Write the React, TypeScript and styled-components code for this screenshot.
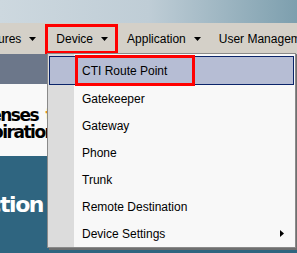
import React from "react";
import styled, { createGlobalStyle } from "styled-components";

const GlobalStyle = createGlobalStyle`
  html, body {
    margin: 0;
    padding: 0;
    background: #2f6580;
  }
`;

interface BarItem {
  label: string;
  highlighted?: boolean;
}

const barItems: BarItem[] = [
  { label: "Features" },
  { label: "Device", highlighted: true },
  { label: "Application" },
  { label: "User Management" },
];

interface MenuEntry {
  label: string;
  active?: boolean;
  submenu?: boolean;
}

const menuEntries: MenuEntry[] = [
  { label: "CTI Route Point", active: true },
  { label: "Gatekeeper" },
  { label: "Gateway" },
  { label: "Phone" },
  { label: "Trunk" },
  { label: "Remote Destination" },
  { label: "Device Settings", submenu: true },
];

const DownArrow = () => (
  <svg width="7" height="4" viewBox="0 0 7 4">
    <polygon points="0,0 7,0 3.5,4" fill="#000" />
  </svg>
);

const RightArrow = () => (
  <svg width="4" height="7" viewBox="0 0 4 7">
    <polygon points="0,0 4,3.5 0,7" fill="#000" />
  </svg>
);

const App: React.FC = () => {
  return (
    <Page>
      <GlobalStyle />
      <Header />
      <MenuBar>
        {barItems.map((item) => (
          <BarButton key={item.label} $highlighted={item.highlighted}>
            {item.label}
            <DownArrow />
          </BarButton>
        ))}
      </MenuBar>
      <Body>
        <SlateBand />
        <Content>
          <Clip>
            <TextLine $shift={-32}>
              Licenses <Accent>that</Accent>
            </TextLine>
            <TextLine $shift={-28}>Expiration</TextLine>
          </Clip>
        </Content>
        <Hero>
          <Clip>
            <HeroTitle>Action</HeroTitle>
          </Clip>
        </Hero>
      </Body>
      <Dropdown>
        {menuEntries.map((entry) => (
          <MenuItem key={entry.label} $active={entry.active}>
            {entry.label}
            {entry.active && <Callout />}
            {entry.submenu && (
              <SubArrow>
                <RightArrow />
              </SubArrow>
            )}
          </MenuItem>
        ))}
      </Dropdown>
    </Page>
  );
};
export default App;

const Page = styled.div`
  position: relative;
  width: 297px;
  height: 253px;
  overflow: hidden;
  display: flex;
  flex-direction: column;
  font-family: "Liberation Sans", Arial, sans-serif;
`;

const Header = styled.div`
  height: 23px;
  flex: none;
  background: linear-gradient(90deg, #cdd8df 0%, #bfcdd6 50%, #7d9fae 100%);
`;

const MenuBar = styled.nav`
  height: 31px;
  flex: none;
  box-sizing: border-box;
  padding-top: 1px;
  margin-left: -35px;
  display: flex;
  background: #d4d0c8;
  white-space: nowrap;
`;

const BarButton = styled.div<{ $highlighted?: boolean }>`
  height: 30px;
  box-sizing: border-box;
  display: flex;
  align-items: center;
  gap: 8px;
  padding: ${(p) => (p.$highlighted ? "0 7px 0 8px" : "0 9px")};
  border: ${(p) => (p.$highlighted ? "3px solid #f00" : "none")};
  font-size: 12px;
  color: #000;
  flex: none;
`;

const Body = styled.div`
  flex: 1;
  display: flex;
  flex-direction: column;
`;

const SlateBand = styled.div`
  height: 30px;
  background: #6c778a;
`;

const Clip = styled.div`
  width: 47px;
  overflow: hidden;
`;

const Content = styled.div`
  height: 72px;
  box-sizing: border-box;
  padding-top: 23px;
  background: #f9f9f9;
  font-family: "DejaVu Sans", Verdana, sans-serif;
  font-weight: bold;
  font-size: 17px;
  line-height: 17px;
  letter-spacing: -1.5px;
  word-spacing: 3px;
  color: #000;
  white-space: nowrap;
`;

const TextLine = styled.div<{ $shift: number }>`
  margin-left: ${(p) => p.$shift}px;
`;

const Accent = styled.span`
  color: #e8901c;
`;

const Hero = styled.div`
  flex: 1;
  background: #2f6580;
  padding-top: 36px;
`;

const HeroTitle = styled.div`
  margin-left: -27px;
  font-family: "DejaVu Sans", Verdana, sans-serif;
  font-weight: bold;
  font-size: 22px;
  line-height: 26px;
  letter-spacing: -1.5px;
  color: #fff;
  white-space: nowrap;
`;

const Dropdown = styled.div`
  position: absolute;
  top: 53px;
  left: 47px;
  width: 249px;
  box-sizing: border-box;
  border: 1px solid #8a8a8a;
  padding: 2px 1px 0 1px;
  background: linear-gradient(90deg, #dcdcdc 26px, #f8f8f8 26px);
  box-shadow: 2px 2px 0 #6f6f6f;
`;

const MenuItem = styled.div<{ $active?: boolean }>`
  position: relative;
  display: flex;
  align-items: center;
  height: ${(p) => (p.$active ? "29px" : "27px")};
  box-sizing: border-box;
  padding-left: ${(p) => (p.$active ? "32px" : "33px")};
  border: ${(p) => (p.$active ? "1px solid #0a246a" : "none")};
  background: ${(p) => (p.$active ? "#b6bdd4" : "transparent")};
  font-size: 12px;
  color: #000;
  white-space: nowrap;
`;

const Callout = styled.span`
  position: absolute;
  left: 25px;
  top: -2px;
  width: 120px;
  height: 31px;
  box-sizing: border-box;
  border: 3px solid #f00;
`;

const SubArrow = styled.span`
  margin-left: auto;
  margin-right: 10px;
  display: flex;
`;
